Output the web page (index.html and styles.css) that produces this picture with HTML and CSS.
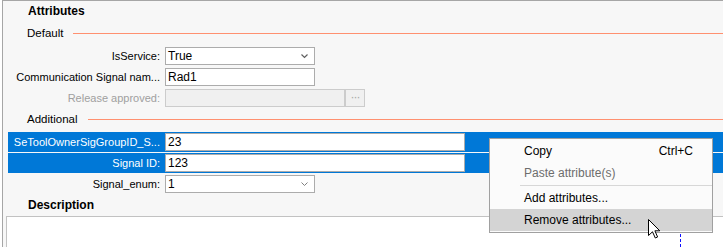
FILE: index.html
```html
<!DOCTYPE html>
<html lang="en">
<head>
    <meta charset="UTF-8">
    <title>Attributes</title>
    <link rel="stylesheet" href="styles.css">
</head>
<body>
    <div class="panel">
        <div class="title">Attributes</div>

        <div class="group"><span>Default</span><div class="rule"></div></div>
        <div class="rows">
            <div class="row">
                <div class="label">IsService:</div>
                <div class="field combo"><span>True</span>
                    <svg width="7" height="5" viewBox="0 0 7 5"><path d="M0.5 0.5 L3.5 3.5 L6.5 0.5" fill="none" stroke="#606060" stroke-width="1.2"/></svg>
                </div>
            </div>
            <div class="row">
                <div class="label">Communication Signal nam...</div>
                <div class="field">Rad1</div>
            </div>
            <div class="row">
                <div class="label disabled">Release approved:</div>
                <div class="field off"></div>
                <div class="dots">···</div>
            </div>
        </div>

        <div class="group"><span>Additional</span><div class="rule"></div></div>
        <div class="rows">
            <div class="row selected">
                <div class="label">SeToolOwnerSigGroupID_S...</div>
                <div class="field wide">23</div>
            </div>
            <div class="row selected">
                <div class="label">Signal ID:</div>
                <div class="field wide">123</div>
            </div>
            <div class="row">
                <div class="label">Signal_enum:</div>
                <div class="field combo"><span>1</span>
                    <svg width="7" height="5" viewBox="0 0 7 5"><path d="M0.5 0.5 L3.5 3.5 L6.5 0.5" fill="none" stroke="#808080" stroke-width="1"/></svg>
                </div>
            </div>
        </div>

        <div class="title desc-title">Description</div>
        <div class="desc-box"></div>
    </div>

    <!-- context menu opened on the selected rows -->
    <div class="menu">
        <div class="item"><span>Copy</span><span>Ctrl+C</span></div>
        <div class="item grey"><span>Paste attribute(s)</span></div>
        <div class="sep"></div>
        <div class="item"><span>Add attributes...</span></div>
        <div class="item hover"><span>Remove attributes...</span></div>
    </div>

    <svg class="cursor" width="13" height="20" viewBox="0 0 13 20">
        <path d="M0.5 0.5 V16.5 L4.5 12.8 L7.3 19 L9.6 18 L6.9 11.8 H11.8 Z" fill="#fff" stroke="#000" stroke-width="1"/>
    </svg>
    <div class="focus-line"></div>
</body>
</html>
```

FILE: styles.css
```css
body {
    margin: 0;
    font-family: "Liberation Sans", Arial, sans-serif;
    font-size: 12px;
    color: #000;
    background: #fff;
    overflow: hidden;
}
.panel {
    position: relative;
    margin-left: 2px;
    height: 246px;
    border-top: 1px solid #a6a6a6;
    border-left: 1px solid #a6a6a6;
    background: #f7f7f7;
}
.title {
    height: 22px;
    line-height: 20px;
    padding-left: 25px;
    font-weight: bold;
}
.desc-title {
    height: 21px;
    line-height: 21px;
}
.group {
    display: flex;
    align-items: center;
    gap: 10px;
    height: 20px;
    padding-left: 24px;
    font-size: 11.5px;
}
.group .rule {
    flex: 1;
    height: 1px;
    background: #ff9070;
}
.rows {
    margin-top: 3px;
}
.row {
    display: flex;
    align-items: center;
    height: 20px;
    margin-bottom: 1px;
    margin-left: 5px;
}
.row.selected {
    background: #0078d7;
    color: #fff;
}
.label {
    width: 157px;
    box-sizing: border-box;
    padding-right: 5px;
    text-align: right;
    white-space: nowrap;
    font-size: 11px;
}
.label.disabled {
    color: #a0a0a0;
}
.field {
    width: 150px;
    height: 18px;
    box-sizing: border-box;
    border: 1px solid #acacac;
    background: #fff;
    color: #000;
    padding-left: 2px;
    line-height: 16px;
}
.field.combo {
    display: flex;
    align-items: center;
    justify-content: space-between;
    padding-right: 6px;
}
.field.wide {
    width: 300px;
}
.field.off {
    width: 180px;
    background: #f0f0f0;
    border-color: #cccccc;
}
.dots {
    width: 20px;
    height: 18px;
    box-sizing: border-box;
    border: 1px solid #cccccc;
    background: #f0f0f0;
    color: #a8a8a8;
    text-align: center;
    line-height: 15px;
    letter-spacing: -1px;
}
.desc-box {
    margin-left: 3px;
    height: 40px;
    background: #fff;
    border: 1px solid #c2c2c2;
    border-right: none;
}
/* Context menu */
.menu {
    position: absolute;
    left: 489px;
    top: 138px;
    width: 224px;
    box-sizing: border-box;
    padding: 1px 0;
    border: 1px solid #a0a0a0;
    background: #fbfbfb;
}
.item {
    display: flex;
    justify-content: space-between;
    height: 22px;
    line-height: 22px;
    padding: 0 19px 0 34px;
}
.item.grey {
    color: #6d6d6d;
}
.item.hover {
    background: #d4d4d4;
}
.sep {
    height: 1px;
    margin: 1px 0 1px 30px;
    background: #d7d7d7;
}
.cursor {
    position: absolute;
    left: 648px;
    top: 219px;
}
.focus-line {
    position: absolute;
    left: 680px;
    top: 234px;
    height: 13px;
    border-left: 1px dashed #1010ff;
}
```
